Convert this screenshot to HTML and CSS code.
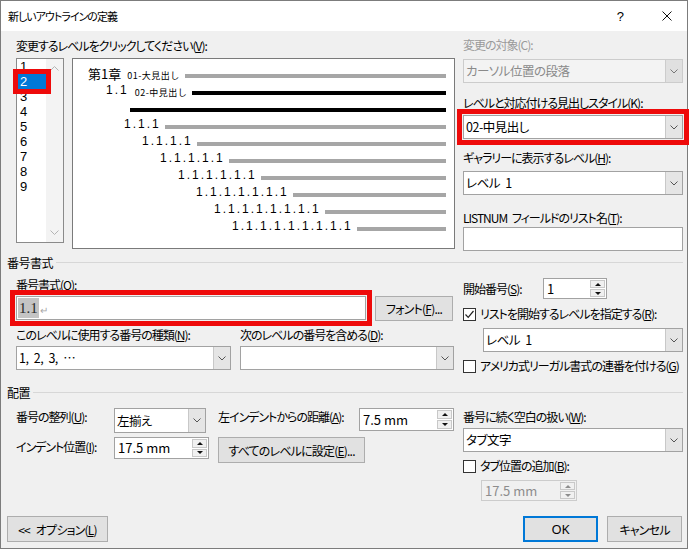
FILE: index.html
```html
<!DOCTYPE html>
<html lang="ja">
<head>
<meta charset="utf-8">
<title>新しいアウトラインの定義</title>
<link rel="stylesheet" href="styles.css">
</head>
<body>
<div class="window">
  <div class="titlebar">
    <span class="title">新しいアウトラインの定義</span>
    <span class="help">?</span>
    <svg class="close" width="10" height="10" viewBox="0 0 10 10"><path d="M0.5 0.5 L9.5 9.5 M9.5 0.5 L0.5 9.5" stroke="#111" stroke-width="1" fill="none"/></svg>
  </div>
  <div class="dialog">
    <div class="grid top">
      <div class="col">
        <div class="label m8">変更するレベルをクリックしてください(<u>V</u>):</div>
        <div class="level-row">
          <div class="listbox">
            <div class="items">
              <div class="item">1</div>
              <div class="item selected">2</div>
              <div class="item">3</div>
              <div class="item">4</div>
              <div class="item">5</div>
              <div class="item">6</div>
              <div class="item">7</div>
              <div class="item">8</div>
              <div class="item">9</div>
            </div>
            <div class="vscroll">
              <svg width="9" height="5" viewBox="0 0 9 5"><path d="M0.5 4.5 L4.5 0.5 L8.5 4.5" stroke="#b4b4b4" fill="none"/></svg>
              <svg width="9" height="5" viewBox="0 0 9 5"><path d="M0.5 0.5 L4.5 4.5 L8.5 0.5" stroke="#b4b4b4" fill="none"/></svg>
            </div>
          </div>
          <div class="preview">
            <div class="pv-row r1"><span class="pv-ch">第1章</span><span class="pv-sm">01-大見出し</span><span class="bar gray"></span></div>
            <div class="pv-row r2"><span class="pv-num">1.1</span><span class="pv-sm">02-中見出し</span><span class="bar black"></span></div>
            <div class="pv-row r3"><span class="bar black"></span></div>
            <div class="pv-row r4"><span class="pv-num">1.1.1</span><span class="bar gray"></span></div>
            <div class="pv-row r5"><span class="pv-num">1.1.1.1</span><span class="bar gray"></span></div>
            <div class="pv-row r6"><span class="pv-num">1.1.1.1.1</span><span class="bar gray"></span></div>
            <div class="pv-row r7"><span class="pv-num">1.1.1.1.1.1</span><span class="bar gray"></span></div>
            <div class="pv-row r8"><span class="pv-num">1.1.1.1.1.1.1</span><span class="bar gray"></span></div>
            <div class="pv-row r9"><span class="pv-num">1.1.1.1.1.1.1.1</span><span class="bar gray"></span></div>
            <div class="pv-row r10"><span class="pv-num">1.1.1.1.1.1.1.1.1</span><span class="bar gray"></span></div>
          </div>
        </div>
      </div>
      <div class="col">
        <div class="label disabled m7">変更の対象(C):</div>
        <div class="combo disabled m7"><span class="val">カーソル位置の段落</span><span class="arrow"><svg width="8" height="5" viewBox="0 0 8 5"><path d="M0.5 0.5 L4 4 L7.5 0.5" stroke="#777" fill="none"/></svg></span></div>
        <div class="label m13">レベルと対応付ける見出しスタイル(<u>K</u>):</div>
        <div class="combo marked m5"><span class="val">02-中見出し</span><span class="arrow"><svg width="8" height="5" viewBox="0 0 8 5"><path d="M0.5 0.5 L4 4 L7.5 0.5" stroke="#555" fill="none"/></svg></span></div>
        <div class="label m12">ギャラリーに表示するレベル(<u>H</u>):</div>
        <div class="combo m6"><span class="val">レベル 1</span><span class="arrow"><svg width="8" height="5" viewBox="0 0 8 5"><path d="M0.5 0.5 L4 4 L7.5 0.5" stroke="#555" fill="none"/></svg></span></div>
        <div class="label m16">LISTNUM フィールドのリスト名(<u>T</u>):</div>
        <div class="textbox m2"></div>
      </div>
    </div>

    <div class="group m5"><span>番号書式</span><span class="rule"></span></div>

    <div class="grid">
      <div class="col">
        <div class="label m8">番号書式(<u>O</u>):</div>
        <div class="fmt-row m4">
          <div class="textbox fmt marked"><span class="sel">1.1</span><span class="ret">↵</span></div>
          <div class="btn font-btn">フォント(<u>F</u>)...</div>
        </div>
        <div class="pair m7">
          <div class="label w224">このレベルに使用する番号の種類(<u>N</u>):</div>
          <div class="label">次のレベルの番号を含める(<u>D</u>):</div>
        </div>
        <div class="pair m4">
          <div class="combo c215"><span class="val">1, 2, 3, …</span><span class="arrow"><svg width="8" height="5" viewBox="0 0 8 5"><path d="M0.5 0.5 L4 4 L7.5 0.5" stroke="#555" fill="none"/></svg></span></div>
          <div class="combo c214"><span class="val"></span><span class="arrow"><svg width="8" height="5" viewBox="0 0 8 5"><path d="M0.5 0.5 L4 4 L7.5 0.5" stroke="#555" fill="none"/></svg></span></div>
        </div>
      </div>
      <div class="col">
        <div class="start-row m8">
          <span class="label w80">開始番号(<u>S</u>):</span>
          <div class="spin s64"><span class="val">1</span><span class="btns"><span><i class="tri-up"></i></span><span><i class="tri-dn"></i></span></span></div>
        </div>
        <div class="check-row m8"><span class="cb"><svg width="11" height="11" viewBox="0 0 11 11"><path d="M1.5 5.5 L4.2 8.3 L9.5 2" stroke="#222" stroke-width="1.2" fill="none"/></svg></span><span class="label">リストを開始するレベルを指定する(<u>R</u>):</span></div>
        <div class="combo indent20 m7"><span class="val">レベル 1</span><span class="arrow"><svg width="8" height="5" viewBox="0 0 8 5"><path d="M0.5 0.5 L4 4 L7.5 0.5" stroke="#555" fill="none"/></svg></span></div>
        <div class="check-row m7"><span class="cb"></span><span class="label">アメリカ式リーガル書式の連番を付ける(<u>G</u>)</span></div>
      </div>
    </div>

    <div class="group m13"><span>配置</span><span class="rule"></span></div>

    <div class="grid">
      <div class="col">
        <div class="place-row m8">
          <span class="label w98 lm2">番号の整列(<u>U</u>):</span>
          <div class="combo c92 h25"><span class="val">左揃え</span><span class="arrow"><svg width="8" height="5" viewBox="0 0 8 5"><path d="M0.5 0.5 L4 4 L7.5 0.5" stroke="#555" fill="none"/></svg></span></div>
          <span class="label w141 lm2 ml12">左インデントからの距離(<u>A</u>):</span>
          <div class="spin s95 h23"><span class="val">7.5 mm</span><span class="btns"><span><i class="tri-up"></i></span><span><i class="tri-dn"></i></span></span></div>
        </div>
        <div class="place-row m4">
          <span class="label w98 lm3">インデント位置(<u>I</u>):</span>
          <div class="spin s95 h22"><span class="val">17.5 mm</span><span class="btns"><span><i class="tri-up"></i></span><span><i class="tri-dn"></i></span></span></div>
          <div class="btn all-btn">すべてのレベルに設定(<u>E</u>)...</div>
        </div>
      </div>
      <div class="col">
        <div class="label m10">番号に続く空白の扱い(<u>W</u>):</div>
        <div class="combo m4"><span class="val">タブ文字</span><span class="arrow"><svg width="8" height="5" viewBox="0 0 8 5"><path d="M0.5 0.5 L4 4 L7.5 0.5" stroke="#555" fill="none"/></svg></span></div>
        <div class="check-row m7"><span class="cb"></span><span class="label">タブ位置の追加(<u>B</u>):</span></div>
        <div class="spin disabled s96 h21 indent18 m7"><span class="val">17.5 mm</span><span class="btns"><span><i class="tri-up"></i></span><span><i class="tri-dn"></i></span></span></div>
      </div>
    </div>

    <div class="footer">
      <div class="btn opt-btn">&lt;&lt; オプション(<u>L</u>)</div>
      <div class="footer-right">
        <div class="btn ok-btn">OK</div>
        <div class="btn cancel-btn">キャンセル</div>
      </div>
    </div>
  </div>
</div>
</body>
</html>
```

FILE: styles.css
```css
* { box-sizing: border-box; }
html, body { margin: 0; padding: 0; background: #ffffff; }
body {
  font-family: "Noto Sans CJK JP", "Noto Sans", sans-serif;
  font-size: 12px;
  color: #000;
  font-feature-settings: "palt" 1;
}
u { text-decoration: underline; text-underline-offset: 1px; }

.window {
  width: 688px;
  height: 549px;
  border: 1px solid #7c7c7c;
  background: #f0f0f0;
  display: flex;
  flex-direction: column;
}
.titlebar {
  flex: none;
  height: 30px;
  background: #fff;
  display: flex;
  align-items: center;
  padding: 0 15px 0 7px;
}
.title { flex: 1; font-size: 11px; letter-spacing: -1px; }
.help { font-family: "Liberation Sans", sans-serif; font-size: 13px; margin-right: 38px; }
.close { display: block; }

.dialog {
  flex: 1;
  padding: 0 4px 0 6px;
  display: flex;
  flex-direction: column;
}
.grid {
  display: grid;
  grid-template-columns: 439px 220px;
  column-gap: 8px;
  padding-left: 9px;
  align-items: start;
}
.col { display: flex; flex-direction: column; }

.m2 { margin-top: 2px; }
.m4 { margin-top: 4px; }
.m5 { margin-top: 5px; }
.m6 { margin-top: 6px; }
.m7 { margin-top: 7px; }
.m8 { margin-top: 8px; }
.m10 { margin-top: 10px; }
.m12 { margin-top: 12px; }
.m13 { margin-top: 13px; }
.m16 { margin-top: 16px; }

.label { line-height: 14px; height: 14px; white-space: nowrap; letter-spacing: -1px; word-spacing: 3px; }
.label.disabled { color: #9a9a9a; }
.w80 { width: 80px; flex: none; }
.w98 { width: 98px; flex: none; }
.w141 { width: 141px; flex: none; }
.w224 { width: 224px; flex: none; }
.lm2 { margin-top: 2px; }
.lm3 { margin-top: 3px; }
.ml12 { margin-left: 12px; }

/* level list + preview */
.level-row { display: flex; gap: 8px; margin-top: 5px; align-items: flex-start; }
.listbox {
  width: 48px;
  height: 185px;
  border: 1px solid #8a8a8a;
  background: #fff;
  display: flex;
}
.items { flex: 1; padding-left: 1px; }
.item {
  height: 15px;
  line-height: 15px;
  padding-left: 2px;
  font-family: "Liberation Sans", sans-serif;
  font-size: 13px;
}
.item.selected {
  background: #0078d7;
  color: #fff;
  outline: 5px solid #ee0a0a;
  position: relative;
  z-index: 1;
}
.vscroll {
  width: 17px;
  background: #f3f3f3;
  display: flex;
  flex-direction: column;
  align-items: center;
  justify-content: space-between;
  padding: 7px 0 7px;
}
.vscroll svg { display: block; }

.preview {
  width: 383px;
  height: 191px;
  border: 1px solid #7a7a7a;
  background: #fff;
  padding: 6px 8px 0 0;
}
.pv-row { height: 17px; display: flex; align-items: center; white-space: nowrap; }
.r1 { padding-left: 15px; }
.r2 { padding-left: 33px; }
.r3 { padding-left: 57px; }
.r4 { padding-left: 51px; }
.r5 { padding-left: 69px; }
.r6 { padding-left: 87px; }
.r7 { padding-left: 105px; }
.r8 { padding-left: 123px; }
.r9 { padding-left: 141px; }
.r10 { padding-left: 159px; }
.pv-ch { font-size: 13px; line-height: 17px; font-feature-settings: normal; }
.pv-sm { font-size: 9px; letter-spacing: 0.5px; margin-left: 6px; line-height: 17px; margin-top: 3px; font-feature-settings: normal; }
.pv-num {
  font-family: "Liberation Sans", sans-serif;
  font-size: 12px;
  letter-spacing: 2px;
  line-height: 17px;
}
.bar { flex: 1; height: 4px; margin-left: 4px; margin-top: 4px; }
.r1 .bar, .r2 .bar { margin-left: 5px; }
.r3 .bar { margin-left: 0; }
.bar.gray { background: #a6a6a6; }
.bar.black { background: #000; }

/* combos */
.combo {
  display: flex;
  height: 24px;
  border: 1px solid #a2a2a2;
  background: #fff;
}
.combo .val { flex: 1; padding-left: 2px; line-height: 22px; white-space: nowrap; overflow: hidden; font-size: 12.5px; letter-spacing: -0.5px; word-spacing: 3px; }
.combo .arrow {
  width: 17px;
  background: #e5e5e5;
  border-left: 1px solid #c8c8c8;
  display: flex;
  align-items: center;
  justify-content: center;
}
.combo .arrow svg { display: block; }
.combo.disabled { background: #f3f3f3; border-color: #cccccc; }
.combo.disabled .val { color: #8a8a8a; }
.combo.disabled .arrow { background: #e0e0e0; border-left-color: #cccccc; }
.marked { outline: 5px solid #ee0a0a; outline-offset: 1px; }
.c215 { width: 215px; }
.c214 { width: 214px; margin-left: 9px; }
.c92 { width: 92px; }
.h25 { height: 25px; }
.h25 .val { line-height: 23px; }
.indent20 { margin-left: 20px; }
.indent18 { margin-left: 18px; }

.textbox { height: 24px; border: 1px solid #a2a2a2; background: #fff; }

/* format row */
.fmt-row { display: flex; align-items: flex-start; gap: 9px; }
.fmt { width: 350px; display: flex; align-items: center; padding-left: 1px; }
.sel {
  background: #c4c4c4;
  color: #2a2a2a;
  font-family: "Liberation Serif", serif;
  font-size: 15px;
  line-height: 20px;
  padding: 0 1px;
}
.ret { color: #a8a8a8; font-size: 10px; margin-left: 1px; margin-top: 2px; }
.pair { display: flex; align-items: flex-start; }

.btn {
  display: flex;
  align-items: center;
  justify-content: center;
  background: #e1e1e1;
  border: 1px solid #adadad;
  white-space: nowrap;
  letter-spacing: -0.8px;
  word-spacing: 4px;
}
.font-btn { width: 78px; height: 25px; }
.all-btn { width: 147px; height: 26px; margin-left: 9px; }

/* right side */
.start-row { display: flex; align-items: center; height: 21px; }
.check-row { display: flex; align-items: center; height: 14px; }
.cb {
  flex: none;
  width: 13px;
  height: 13px;
  border: 1px solid #333;
  background: #fff;
  margin-right: 4px;
  display: flex;
  align-items: center;
  justify-content: center;
}
.cb svg { display: block; }

/* spinners */
.spin {
  display: flex;
  border: 1px solid #a2a2a2;
  background: #fff;
  height: 21px;
}
.spin .val { flex: 1; padding-left: 3px; font-size: 13px; line-height: 19px; white-space: nowrap; }
.spin .btns { width: 16px; display: flex; flex-direction: column; padding: 1px 1px 1px 0; gap: 1px; }
.spin .btns span {
  flex: 1;
  background: #f0f0f0;
  border: 1px solid #c8c8c8;
  display: flex;
  align-items: center;
  justify-content: center;
}
.tri-up { width: 0; height: 0; border-left: 3px solid transparent; border-right: 3px solid transparent; border-bottom: 3px solid #111; }
.tri-dn { width: 0; height: 0; border-left: 3px solid transparent; border-right: 3px solid transparent; border-top: 3px solid #111; }
.spin.disabled { background: #f0f0f0; border-color: #cccccc; }
.spin.disabled .val { color: #8d8d8d; }
.spin.disabled .tri-up { border-bottom-color: #8d8d8d; }
.spin.disabled .tri-dn { border-top-color: #8d8d8d; }
.s64 { width: 64px; }
.s95 { width: 95px; }
.s96 { width: 96px; }
.h23 { height: 23px; }
.h23 .val { line-height: 21px; }
.h22 { height: 22px; }
.h22 .val { line-height: 20px; }

.place-row { display: flex; align-items: flex-start; }

/* group headers */
.group { display: flex; align-items: center; height: 14px; line-height: 14px; letter-spacing: -0.5px; }
.group .rule { flex: 1; height: 1px; background: #d7d7d7; margin-left: 3px; margin-top: -1px; }

/* footer */
.footer { display: flex; justify-content: space-between; margin-top: 15px; padding-right: 1px; }
.footer-right { display: flex; gap: 9px; }
.opt-btn { width: 101px; height: 26px; }
.ok-btn { width: 75px; height: 26px; border: 2px solid #0078d7; font-family: "Noto Sans", sans-serif; font-size: 13px; letter-spacing: 0; }
.cancel-btn { width: 75px; height: 26px; }
```
